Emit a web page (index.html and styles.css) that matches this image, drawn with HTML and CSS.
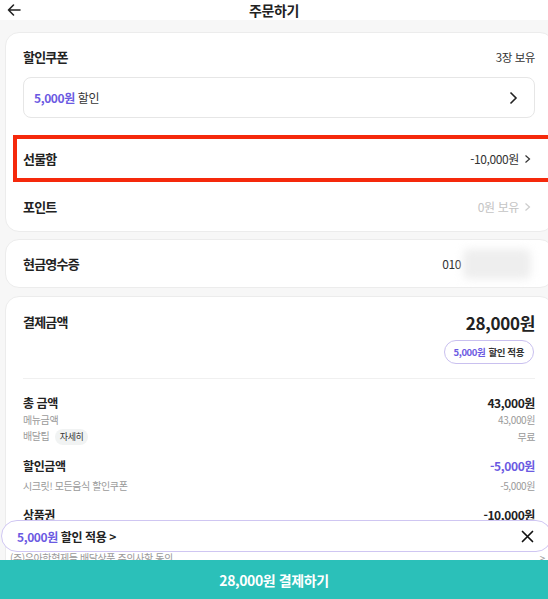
FILE: index.html
```html
<!DOCTYPE html>
<html lang="ko">
<head>
<meta charset="utf-8">
<link rel="stylesheet" href="styles.css">
</head>
<body>
<header class="topbar">
  <svg class="back" width="14" height="14" viewBox="0 0 14 14"><path d="M13 7H1.5M6.5 2L1.5 7l5 5" fill="none" stroke="#222" stroke-width="1.6" stroke-linecap="round" stroke-linejoin="round"/></svg>
  <h1 class="title">주문하기</h1>
</header>
<main class="content">
  <section class="card card-discount">
    <div class="row head-row">
      <span class="label">할인쿠폰</span>
      <span class="sub">3장 보유</span>
    </div>
    <div class="coupon-box">
      <span class="coupon-text"><b class="purple">5,000원</b> 할인</span>
      <svg width="10" height="14" viewBox="0 0 10 14"><path d="M2.5 1.5L8 7l-5.5 5.5" fill="none" stroke="#222" stroke-width="1.6"/></svg>
    </div>
    <div class="row gift-row">
      <span class="label">선물함</span>
      <span class="value">-10,000원 <svg width="7" height="10" viewBox="0 0 7 10"><path d="M1.5 1.5L5.5 5l-4 3.5" fill="none" stroke="#333" stroke-width="1.2"/></svg></span>
    </div>
    <div class="row point-row">
      <span class="label">포인트</span>
      <span class="value muted">0원 보유 <svg width="7" height="10" viewBox="0 0 7 10"><path d="M1.5 1.5L5.5 5l-4 3.5" fill="none" stroke="#ccc" stroke-width="1.2"/></svg></span>
    </div>
  </section>

  <section class="card card-receipt">
    <div class="row receipt-row">
      <span class="label">현금영수증</span>
      <span class="phone">010<span class="blur"></span></span>
    </div>
  </section>

  <section class="card card-pay">
    <div class="row pay-head">
      <span class="label">결제금액</span>
      <span class="total">28,000원</span>
    </div>
    <div class="pill-wrap"><span class="pill"><b class="purple">5,000원</b> 할인 적용</span></div>
    <hr class="divider">
    <div class="row line bold-line first">
      <span>총 금액</span><span>43,000원</span>
    </div>
    <div class="row line small-line">
      <span>메뉴금액</span><span>43,000원</span>
    </div>
    <div class="row line small-line">
      <span>배달팁 <span class="chip">자세히</span></span><span>무료</span>
    </div>
    <div class="row line bold-line">
      <span>할인금액</span><span class="purple">-5,000원</span>
    </div>
    <div class="row line small-line after-bold">
      <span>시크릿! 모든음식 할인쿠폰</span><span>-5,000원</span>
    </div>
    <div class="row line bold-line">
      <span>상품권</span><span>-10,000원</span>
    </div>
    <div class="row agree">
      <span>(주)우아한형제들 배달상품 주의사항 동의</span><span>&gt;</span>
    </div>
  </section>
</main>

<div class="float-pill">
  <span><b class="purple">5,000원</b> 할인 적용 &gt;</span>
  <svg width="13" height="13" viewBox="0 0 13 13"><path d="M1.5 1.5l10 10M11.5 1.5l-10 10" stroke="#111" stroke-width="1.7" stroke-linecap="round"/></svg>
</div>
<div class="pay-btn">28,000원 결제하기</div>
</body>
</html>
```
FILE: styles.css
```css
* { box-sizing: border-box; }
html, body { margin: 0; padding: 0; }
body {
  width: 548px;
  height: 599px;
  overflow: hidden;
  background: #f7f7f7;
  font-family: "Noto Sans CJK KR", "Noto Sans", sans-serif;
  color: #222;
  letter-spacing: -0.4px;
}
.topbar {
  position: relative;
  height: 20px;
  display: flex;
  align-items: center;
  justify-content: center;
  background: #fff;
}
.back { position: absolute; left: 7px; top: 3px; }
.title { margin: 0; font-size: 14px; font-weight: 700; line-height: 18px; }

.content { padding: 12px 0 0 5px; }
.card {
  background: #fff;
  border: 1px solid #ececec;
  border-radius: 14px;
  margin-right: -6px;
  padding: 0 18px 0 17px;
}
.row { display: flex; align-items: center; justify-content: space-between; }
.label { font-size: 13px; font-weight: 700; line-height: 20px; letter-spacing: -0.8px; }
.sub { font-size: 11.5px; color: #333; }
.purple { color: #6b5ae2; font-weight: 700; }

.head-row { padding-top: 14px; height: 34px; }
.coupon-box {
  margin-top: 10px;
  height: 41px;
  border: 1px solid #e6e6e6;
  border-radius: 8px;
  display: flex; align-items: center; justify-content: space-between;
  padding: 0 16px 0 10px;
}
.coupon-text { font-size: 12px; color: #333; }
.gift-row {
  margin: 17px -20px 0 -10px;
  height: 47px;
  border: 4px solid #f5290c;
  padding: 0 20px 0 6px;
}
.value { font-size: 12px; color: #333; display: flex; align-items: center; gap: 5px; }
.value.muted { color: #c4c4c4; }
.point-row { height: 49px; padding-right: 4px; }

.card-receipt { margin-top: 7px; }
.receipt-row { height: 47px; }
.phone { font-size: 12px; color: #333; display: flex; align-items: center; }
.blur {
  display: inline-block;
  width: 68px; height: 30px;
  margin-left: 2px; margin-right: 4px;
  background: #eeeeee;
  filter: blur(4px);
  border-radius: 6px;
}

.card-pay { margin-top: 8px; padding-bottom: 40px; }
.pay-head { padding-top: 15px; height: 35px; }
.total { font-size: 17px; font-weight: 700; letter-spacing: -0.3px; }
.pill-wrap { display: flex; justify-content: flex-end; margin-top: 8px; }
.pill {
  font-size: 9.5px; font-weight: 700; color: #333;
  border: 1px solid #c9c0ef;
  border-radius: 12px;
  height: 24px; padding: 0 9px;
  display: flex; align-items: center; gap: 3px;
  margin-right: 1px;
}
.divider { border: 0; border-top: 1px solid #f0f0f0; margin: 14px 0 0; }
.line { font-size: 11px; }
.bold-line { font-weight: 700; font-size: 12px; height: 18px; margin-top: 11.5px; }
.bold-line.first { margin-top: 14px; }
.small-line { color: #9a9a9a; font-size: 10px; height: 17px; margin-top: 0; }
.small-line.after-bold { margin-top: 2.5px; }
.chip {
  display: inline-block;
  background: #f1f3f3;
  color: #333;
  border-radius: 8px;
  padding: 0 5px;
  margin-left: 3px;
  line-height: 16px;
  font-size: 9px;
}
.agree { color: #999; font-size: 10px; margin: 26px -10px 0 -13px; }

.float-pill {
  position: fixed;
  left: 1px; right: -4px; top: 520px;
  height: 32px;
  background: #fff;
  border: 1px solid #cfc6f2;
  border-radius: 16px;
  display: flex; align-items: center; justify-content: space-between;
  padding: 0 17px 0 15px;
  font-size: 12px; font-weight: 700; color: #222;
}
.pay-btn {
  position: fixed;
  left: 0; right: 0; bottom: 0;
  height: 39px;
  background: #2bc0b9;
  color: #fff;
  font-size: 14px; font-weight: 700;
  display: flex; align-items: center; justify-content: center;
}
```
